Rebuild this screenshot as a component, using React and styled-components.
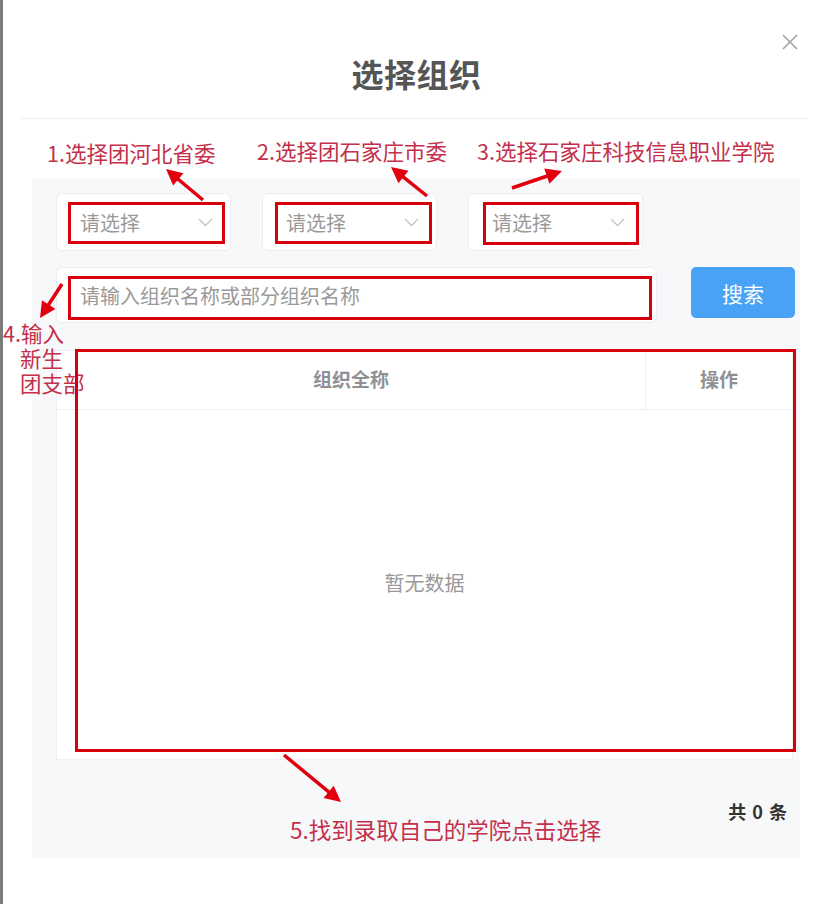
import React from "react";
import styled, { createGlobalStyle } from "styled-components";

const GlobalStyle = createGlobalStyle`
  html, body {
    margin: 0;
    padding: 0;
    background: #ffffff;
  }
  body {
    font-family: "Noto Sans CJK SC", "Noto Sans", sans-serif;
  }
`;

const Page = styled.div`
  position: relative;
  width: 830px;
  height: 904px;
  box-sizing: border-box;
  border-left: 3px solid #7a7a7a;
  background: #fff;
  overflow: hidden;
`;

const Header = styled.div`
  height: 118px;
  display: flex;
  align-items: center;
  justify-content: center;
  box-sizing: border-box;
  padding-top: 28px;
`;

const Title = styled.h2`
  margin: 0;
  font-size: 32px;
  font-weight: 700;
  color: #555;
  letter-spacing: 0.5px;
`;

const Close = styled.button`
  position: absolute;
  top: 33px;
  right: 31px;
  width: 18px;
  height: 18px;
  padding: 0;
  border: 0;
  background: none;
  display: flex;
`;

const Divider = styled.div`
  margin: 0 22px 0 18px;
  border-top: 1px solid #efefef;
`;

const Panel = styled.div`
  margin: 59px 0 0 29px;
  width: 768px;
  height: 680px;
  box-sizing: border-box;
  background: #f7f8fa;
  padding: 15px 0 0 24px;
  display: flex;
  flex-direction: column;
`;

const SelectRow = styled.div`
  display: flex;
  gap: 31px;
`;

const Card = styled.div`
  box-sizing: border-box;
  flex-shrink: 0;
  width: ${(p) => p.$w}px;
  height: ${(p) => p.$h}px;
  background: #fff;
  border: 1px solid #ebedf0;
  border-radius: 6px;
  display: flex;
  align-items: center;
  padding: 0 17px 0 23px;
  justify-content: space-between;
`;

const Placeholder = styled.span`
  font-size: 20px;
  color: #9a9a9a;
`;

const SearchRow = styled.div`
  display: flex;
  margin-top: 16px;
  gap: 34px;
`;

const SearchButton = styled.button`
  flex-shrink: 0;
  width: 104px;
  height: 51px;
  border: 0;
  border-radius: 5px;
  background: #48a2f6;
  color: #fff;
  font-family: inherit;
  font-size: 21px;
`;

const Table = styled.div`
  margin-top: 27px;
  width: 737px;
  height: 410px;
  background: #fff;
  border: 1px solid #eef0f3;
  box-sizing: border-box;
  display: flex;
  flex-direction: column;
`;

const HeadRow = styled.div`
  display: grid;
  grid-template-columns: 588px 1fr;
  height: 58px;
  border-bottom: 1px solid #eef0f3;
`;

const HeadCell = styled.div`
  display: flex;
  align-items: center;
  justify-content: center;
  padding-bottom: 4px;
  font-size: 19px;
  font-weight: 700;
  color: #8e9096;
  border-left: ${(p) => (p.$divider ? "1px solid #eef0f3" : "0")};
`;

const Empty = styled.div`
  flex: 1;
  display: flex;
  align-items: center;
  justify-content: center;
  font-size: 20px;
  color: #999;
  padding-bottom: 4px;
`;

const Footer = styled.div`
  display: flex;
  justify-content: flex-end;
  padding: 38px 13px 0 0;
  font-size: 18px;
  font-weight: 700;
  color: #333;
  word-spacing: 2px;
`;

/* annotations drawn over the screenshot */
const Note = styled.div`
  position: absolute;
  left: ${(p) => p.$x}px;
  top: ${(p) => p.$y}px;
  font-size: ${(p) => p.$size || 21.5}px;
  line-height: 25px;
  color: #c4304b;
  white-space: nowrap;
`;

const Indent = styled.span`
  display: block;
  padding-left: 17px;
`;

const Box = styled.div`
  position: absolute;
  left: ${(p) => p.$x}px;
  top: ${(p) => p.$y}px;
  width: ${(p) => p.$w}px;
  height: ${(p) => p.$h}px;
  box-sizing: border-box;
  border: 3px solid #d8000c;
`;

const Arrows = styled.svg`
  position: absolute;
  left: -3px;
  top: 0;
  pointer-events: none;
`;

function Chevron() {
  return (
    <svg width="15" height="9" viewBox="0 0 15 9">
      <path d="M1 1l6.5 6.5L14 1" fill="none" stroke="#c0c4cc" strokeWidth="1.3" />
    </svg>
  );
}

function Arrow({ from, to }) {
  const [x1, y1] = from;
  const [x2, y2] = to;
  const dx = x2 - x1;
  const dy = y2 - y1;
  const len = Math.hypot(dx, dy);
  const ux = dx / len;
  const uy = dy / len;
  const head = 16;
  const half = 8;
  const bx = x2 - ux * head;
  const by = y2 - uy * head;
  const pts = [
    [x2, y2],
    [bx - uy * half, by + ux * half],
    [bx + uy * half, by - ux * half],
  ]
    .map((p) => p.join(","))
    .join(" ");
  return (
    <g>
      <line x1={x1} y1={y1} x2={bx + ux * 2} y2={by + uy * 2} stroke="#e2000f" strokeWidth="3.5" />
      <polygon points={pts} fill="#e2000f" />
    </g>
  );
}

export default function App() {
  return (
    <>
      <GlobalStyle />
      <Page>
        <Header>
          <Title>选择组织</Title>
        </Header>
        <Close aria-label="close">
          <svg width="18" height="18" viewBox="0 0 18 18">
            <path d="M2 2l14 14M16 2L2 16" stroke="#a3a3a3" strokeWidth="1.6" />
          </svg>
        </Close>
        <Divider />

        <Panel>
          <SelectRow>
            {[0, 1, 2].map((i) => (
              <Card key={i} $w={175} $h={58}>
                <Placeholder>请选择</Placeholder>
                <Chevron />
              </Card>
            ))}
          </SelectRow>

          <SearchRow>
            <Card $w={601} $h={56}>
              <Placeholder>请输入组织名称或部分组织名称</Placeholder>
            </Card>
            <SearchButton>搜索</SearchButton>
          </SearchRow>

          <Table>
            <HeadRow>
              <HeadCell>组织全称</HeadCell>
              <HeadCell $divider>操作</HeadCell>
            </HeadRow>
            <Empty>暂无数据</Empty>
          </Table>

          <Footer>共 0 条</Footer>
        </Panel>

        <Note $x={44} $y={140}>1.选择团河北省委</Note>
        <Note $x={254} $y={138}>2.选择团石家庄市委</Note>
        <Note $x={474} $y={138}>3.选择石家庄科技信息职业学院</Note>
        <Note $x={0} $y={320}>
          4.输入
          <Indent>新生</Indent>
          <Indent>团支部</Indent>
        </Note>
        <Note $x={287} $y={817} $size={22.5}>5.找到录取自己的学院点击选择</Note>

        <Box $x={65} $y={202} $w={157} $h={42} />
        <Box $x={272} $y={202} $w={157} $h={42} />
        <Box $x={480} $y={202} $w={156} $h={43} />
        <Box $x={65} $y={276} $w={584} $h={44} />
        <Box $x={72} $y={349} $w={721} $h={403} />

        <Arrows width="830" height="904" viewBox="0 0 830 904">
          <Arrow from={[203, 200]} to={[166, 169]} />
          <Arrow from={[427, 196]} to={[391, 167]} />
          <Arrow from={[512, 188]} to={[562, 171]} />
          <Arrow from={[62, 284]} to={[40, 318]} />
          <Arrow from={[284, 755]} to={[341, 802]} />
        </Arrows>
      </Page>
    </>
  );
}
